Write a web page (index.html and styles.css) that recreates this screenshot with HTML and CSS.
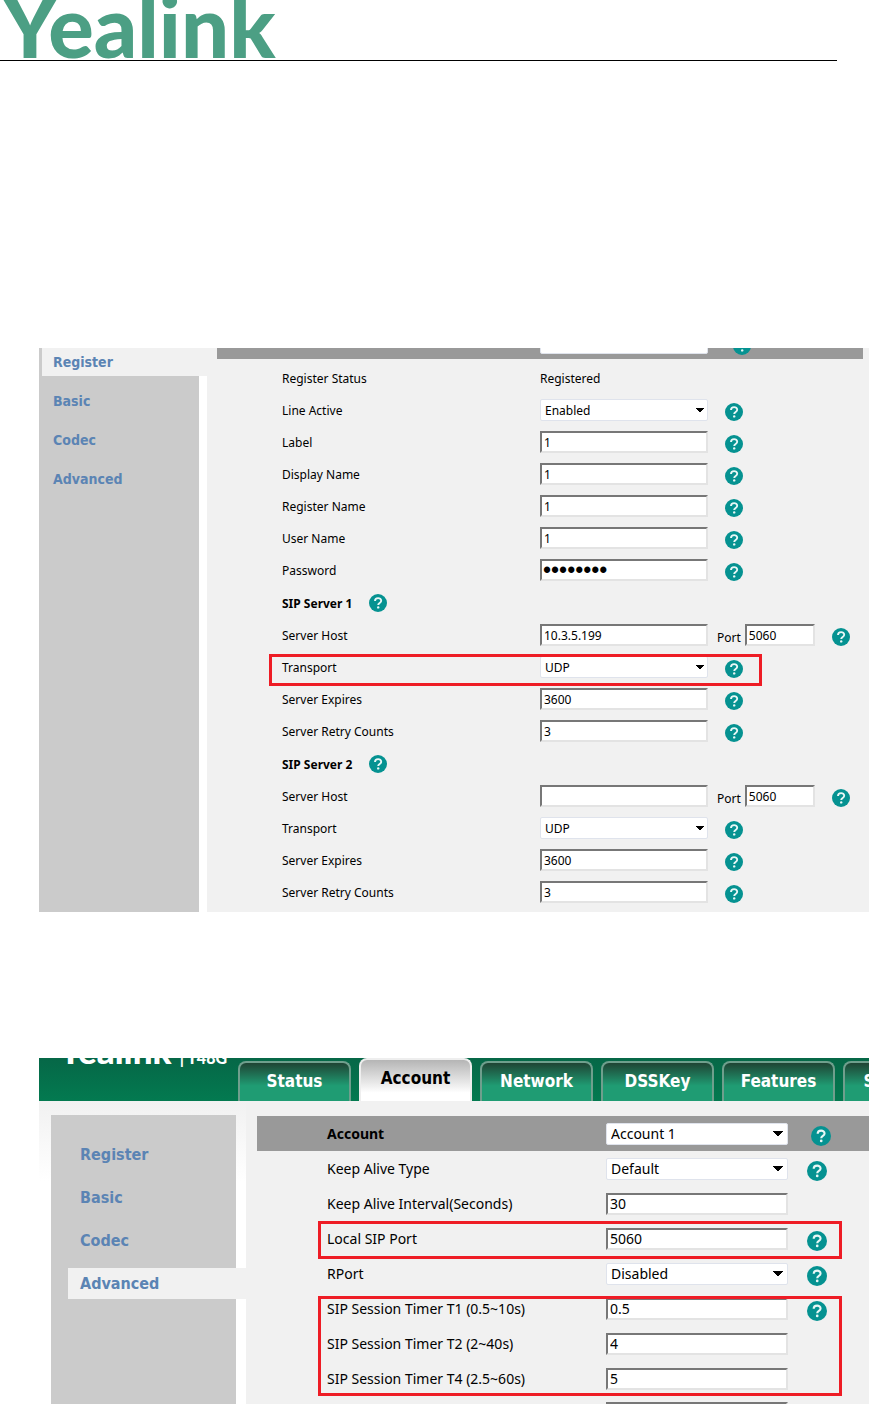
FILE: index.html
```html
<!DOCTYPE html>
<html lang="en">
<head>
    <meta charset="UTF-8">
    <meta name="viewport" content="width=device-width, initial-scale=1.0">
    <title>Yealink SIP Account</title>
    <link rel="stylesheet" href="styles.css">
</head>
<body>
    <svg class="defs" width="0" height="0">
        <symbol id="help" viewBox="0 0 18 18">
            <circle cx="9" cy="9" r="9" fill="#059291"/>
            <path d="M6 7C6 3.200 12.200 3.200 12.200 6.800C12.200 9 9.200 8.900 9.200 11" fill="none" stroke="#e8f7f6" stroke-width="1.900"/>
            <circle cx="9.200" cy="13.400" r="1.200" fill="#e8f7f6"/>
        </symbol>
    </svg>

    <header class="page-head">
        <div class="logo">Yealink</div>
    </header>

    <section class="shot register">
        <nav class="side">
            <a href="#" class="active">Register</a>
            <a href="#">Basic</a>
            <a href="#">Codec</a>
            <a href="#">Advanced</a>
        </nav>
        <form class="content">
            <div class="bar">
                <select class="field" aria-label="Account"><option></option></select>
                <svg class="help"><use href="#help"/></svg>
            </div>
            <div class="group">
                <div class="row"><span class="label">Register Status</span><span>Registered</span></div>
                <div class="row"><label class="label" for="active">Line Active</label><select class="field" id="active"><option>Enabled</option></select><svg class="help"><use href="#help"/></svg></div>
                <div class="row"><label class="label" for="lbl">Label</label><input class="field" type="text" id="lbl" value="1"><svg class="help"><use href="#help"/></svg></div>
                <div class="row"><label class="label" for="display">Display Name</label><input class="field" type="text" id="display" value="1"><svg class="help"><use href="#help"/></svg></div>
                <div class="row"><label class="label" for="regname">Register Name</label><input class="field" type="text" id="regname" value="1"><svg class="help"><use href="#help"/></svg></div>
                <div class="row"><label class="label" for="user">User Name</label><input class="field" type="text" id="user" value="1"><svg class="help"><use href="#help"/></svg></div>
                <div class="row"><label class="label" for="pass">Password</label><input class="field" type="password" id="pass" value="password"><svg class="help"><use href="#help"/></svg></div>
            </div>
            <div class="group">
                <div class="row title"><b>SIP Server 1</b><svg class="help"><use href="#help"/></svg></div>
                <div class="row"><label class="label" for="host1">Server Host</label><input class="field" type="text" id="host1" value="10.3.5.199"><label class="port" for="port1">Port</label><input class="field small" type="text" id="port1" value="5060"><svg class="help"><use href="#help"/></svg></div>
                <div class="row mark"><label class="label" for="trans1">Transport</label><select class="field" id="trans1"><option>UDP</option></select><svg class="help"><use href="#help"/></svg></div>
                <div class="row"><label class="label" for="exp1">Server Expires</label><input class="field" type="text" id="exp1" value="3600"><svg class="help"><use href="#help"/></svg></div>
                <div class="row"><label class="label" for="retry1">Server Retry Counts</label><input class="field" type="text" id="retry1" value="3"><svg class="help"><use href="#help"/></svg></div>
            </div>
            <div class="group">
                <div class="row title"><b>SIP Server 2</b><svg class="help"><use href="#help"/></svg></div>
                <div class="row"><label class="label" for="host2">Server Host</label><input class="field" type="text" id="host2"><label class="port" for="port2">Port</label><input class="field small" type="text" id="port2" value="5060"><svg class="help"><use href="#help"/></svg></div>
                <div class="row"><label class="label" for="trans2">Transport</label><select class="field" id="trans2"><option>UDP</option></select><svg class="help"><use href="#help"/></svg></div>
                <div class="row"><label class="label" for="exp2">Server Expires</label><input class="field" type="text" id="exp2" value="3600"><svg class="help"><use href="#help"/></svg></div>
                <div class="row"><label class="label" for="retry2">Server Retry Counts</label><input class="field" type="text" id="retry2" value="3"><svg class="help"><use href="#help"/></svg></div>
            </div>
        </form>
    </section>

    <section class="shot advanced">
        <div class="top">
            <div class="brand">Yealink<small>| T48G</small></div>
            <nav class="tabs">
                <a href="#">Status</a>
                <a href="#" class="current">Account</a>
                <a href="#">Network</a>
                <a href="#">DSSKey</a>
                <a href="#">Features</a>
                <a href="#">Settings</a>
            </nav>
        </div>
        <div class="main">
            <nav class="side">
                <a href="#">Register</a>
                <a href="#">Basic</a>
                <a href="#">Codec</a>
                <a href="#" class="active">Advanced</a>
            </nav>
            <form class="content">
                <div class="row bar"><label class="label" for="account">Account</label><select class="field" id="account"><option>Account 1</option></select><svg class="help"><use href="#help"/></svg></div>
                <div class="row"><label class="label" for="alive">Keep Alive Type</label><select class="field" id="alive"><option>Default</option></select><svg class="help"><use href="#help"/></svg></div>
                <div class="row"><label class="label" for="interval">Keep Alive Interval(Seconds)</label><input class="field" type="text" id="interval" value="30"></div>
                <div class="row mark"><label class="label" for="sipport">Local SIP Port</label><input class="field" type="text" id="sipport" value="5060"><svg class="help"><use href="#help"/></svg></div>
                <div class="row"><label class="label" for="rport">RPort</label><select class="field" id="rport"><option>Disabled</option></select><svg class="help"><use href="#help"/></svg></div>
                <div class="mark timers">
                    <div class="row"><label class="label" for="t1">SIP Session Timer T1 (0.5~10s)</label><input class="field" type="text" id="t1" value="0.5"><svg class="help"><use href="#help"/></svg></div>
                    <div class="row"><label class="label" for="t2">SIP Session Timer T2 (2~40s)</label><input class="field" type="text" id="t2" value="4"></div>
                    <div class="row"><label class="label" for="t4">SIP Session Timer T4 (2.5~60s)</label><input class="field" type="text" id="t4" value="5"></div>
                </div>
                <div class="row next"><span class="label"></span><input class="field" type="text" aria-label="Next setting"></div>
            </form>
        </div>
    </section>
</body>
</html>
```
FILE: styles.css
```css
body{
    margin: 0;
    background-color: white;
    color: black;
    font-family: "Noto Sans", sans-serif;
    font-size: 12px;
    overflow-x: hidden;
}
.defs{
    display: block;
}
a{
    text-decoration: none;
}

/* page heading */
.page-head{
    height: 60px;
    margin-right: 32px;
    padding-left: 2px;
    border-bottom: 1px solid black;
    display: flex;
    align-items: flex-end;
    overflow: hidden;
}
.logo{
    font-family: Lato, sans-serif;
    font-weight: 900;
    font-size: 85px;
    line-height: 92px;
    color: #4c9f84;
    margin-bottom: -11px;
}

.shot{
    margin-left: 39px;
    overflow: hidden;
}
.register{
    display: flex;
    margin-top: 287px;
}

/* side menu */
.side{
    display: flex;
    flex-direction: column;
    box-sizing: border-box;
    flex-shrink: 0;
    background-color: #cbcbcb;
    font-family: "DejaVu Sans Condensed", "Noto Sans", sans-serif;
    font-weight: bold;
}
.side a{
    color: #5b84b4;
}
.register .side{
    width: 160px;
    margin-right: 8px;
    padding-left: 3px;
    font-size: 14px;
}
.register .side a{
    padding-left: 11px;
    line-height: 28px;
    margin-bottom: 11px;
}
.side .active{
    background-color: #f1f1f1;
}
.register .side .active{
    margin-right: -8px;
}

/* form rows */
.content{
    flex: 1;
    min-width: 0;
    background-color: #f1f1f1;
}
.register .content{
    padding-bottom: 3px;
}
.register .bar{
    display: flex;
    align-items: flex-end;
    height: 11px;
    margin: 0 6px 3px 10px;
    padding-left: 323px;
    background-color: #999;
    overflow: hidden;
}
.register .bar .field{
    margin-bottom: 5px;
}
.register .bar .help{
    margin-bottom: 4px;
    margin-left: 25px;
}
.group{
    padding-left: 75px;
    margin-bottom: 1px;
}
.row{
    display: flex;
    align-items: center;
    height: 32px;
    white-space: nowrap;
}
.label{
    width: 258px;
    flex-shrink: 0;
}
.field{
    box-sizing: border-box;
    width: 168px;
    height: 22px;
    flex-shrink: 0;
    margin: 0;
    padding: 0 2px;
    border: 2px solid #e3e3e3;
    border-top-color: #777;
    border-left-color: #777;
    background-color: white;
    color: black;
    font: inherit;
}
select.field{
    appearance: none;
    padding: 0 4px;
    border: 1px solid #dfe3ec;
    border-radius: 2px;
    background-image: linear-gradient(to bottom left, black 50%, transparent 51%), linear-gradient(to bottom right, black 50%, transparent 51%);
    background-size: 4px 4px;
    background-position: right 7px center, right 3px center;
    background-repeat: no-repeat;
}
input[type="password"]{
    padding: 0 1px;
    font-family: "Liberation Sans", Arial, sans-serif;
    font-size: 23px;
}
.small{
    width: 70px;
}
.port{
    margin: 4px 4px 0 9px;
}
.help{
    width: 18px;
    height: 18px;
    flex-shrink: 0;
    margin: 4px 0 0 17px;
}
.title .help{
    margin-top: 0;
}

/* red frames */
.mark{
    position: relative;
}
.mark::after{
    content: "";
    position: absolute;
    box-sizing: border-box;
    top: 3px;
    left: -13px;
    width: 493px;
    height: 32px;
    border: 3px solid #ee1c25;
    pointer-events: none;
}

/* advanced page */
.advanced{
    margin-top: 146px;
    font-size: 14px;
}
.top{
    display: flex;
    height: 43px;
    background: linear-gradient(#066747, #037a50);
}
.brand{
    box-sizing: border-box;
    width: 199px;
    flex-shrink: 0;
    padding-left: 20px;
    margin-top: -28px;
    font-family: Lato, sans-serif;
    font-weight: 900;
    font-size: 35px;
    line-height: 40px;
    color: white;
    white-space: nowrap;
}
.brand small{
    margin-left: 8px;
    font-size: 16px;
}
.tabs{
    display: flex;
    align-items: flex-end;
    gap: 8px;
    font-family: "DejaVu Sans Condensed", "Noto Sans", sans-serif;
}
.tabs a{
    box-sizing: border-box;
    width: 113px;
    height: 40px;
    flex-shrink: 0;
    border: 2px solid #6f9f8d;
    border-bottom: none;
    border-radius: 8px 8px 0 0;
    background: linear-gradient(#1f4434, #1f9c73 60%);
    color: white;
    font-size: 17px;
    font-weight: bold;
    line-height: 36px;
    text-align: center;
}
.tabs .current{
    height: 43px;
    border-color: #eee;
    background: linear-gradient(#b5b5b5, white 80%);
    color: black;
}
.main{
    display: flex;
    padding-left: 12px;
    background: linear-gradient(#f1f1f1, white 80px);
}
.advanced .side{
    width: 185px;
    margin: 14px 10px 0 0;
    padding: 24px 0 0 17px;
    font-size: 16px;
}
.advanced .side a{
    padding-left: 12px;
    line-height: 31px;
    margin-bottom: 12px;
}
.advanced .side .active{
    margin-right: -10px;
}
.advanced .content{
    padding: 15px 0 0 11px;
}
.advanced .row{
    height: 35px;
    padding-left: 70px;
}
.advanced .bar{
    background-color: #999;
}
.bar .label{
    font-weight: bold;
}
.advanced .label{
    width: 279px;
}
.advanced .field{
    width: 182px;
}
.advanced select.field{
    background-size: 5px 5px;
    background-position: right 9px center, right 4px center;
}
.advanced .help{
    width: 20px;
    height: 20px;
    margin-left: 19px;
}
.advanced .bar .help{
    margin-left: 23px;
}
.advanced .mark::after{
    top: 0;
    left: 61px;
    width: 524px;
    height: 38px;
}
.advanced .timers::after{
    top: 5px;
    height: 100px;
}
.advanced .next{
    box-sizing: border-box;
    height: 8px;
    padding-top: 6px;
    align-items: flex-start;
    overflow: hidden;
}
```
